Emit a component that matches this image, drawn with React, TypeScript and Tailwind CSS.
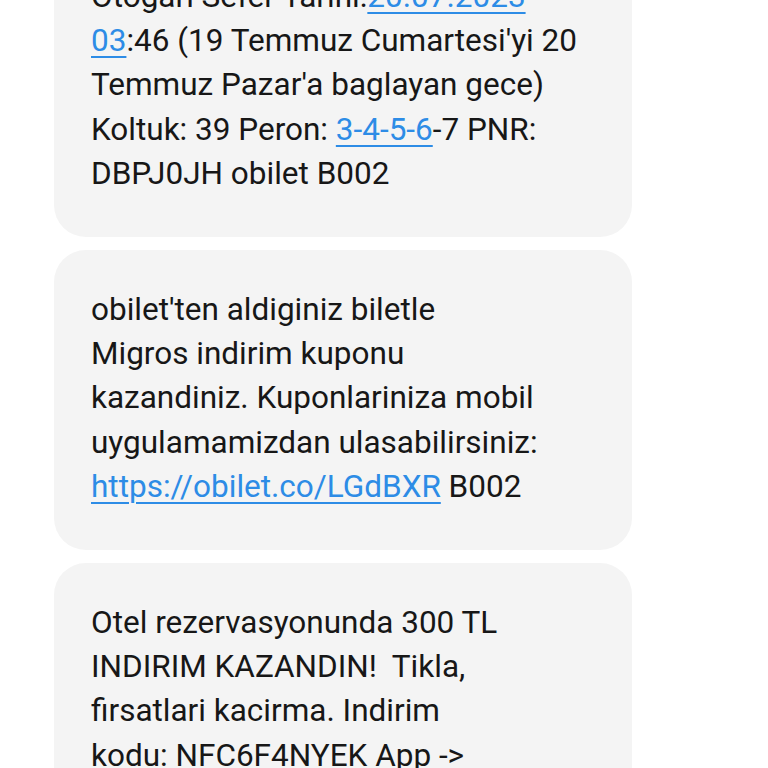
import React from 'react';

const Link: React.FC<{ children: React.ReactNode }> = ({ children }) => (
  <span className="text-[#2d8ce6] underline decoration-[1.5px] underline-offset-[5px]">{children}</span>
);

const Bubble: React.FC<{ lines: React.ReactNode[] }> = ({ lines }) => (
  <div className="w-[578px] rounded-[32px] bg-[#f4f4f4] px-[37px] pt-[38px] pb-[41px]">
    {lines.map((l, i) => (
      <div key={i} className="whitespace-pre">
        {l}
      </div>
    ))}
  </div>
);

export default function App() {
  return (
    <div
      className="h-[768px] w-[768px] overflow-hidden bg-white pl-[54px] text-[31.5px] leading-[44.2px] text-[#171717]"
      style={{ fontFamily: 'Roboto, "Noto Sans", sans-serif' }}
    >
      <div className="-mt-[63px] flex flex-col gap-[13px]">
        <Bubble
          lines={[
            <>Otogari Sefer Tarihi:<Link>20.07.2023</Link></>,
            <><Link>03</Link>:46 (19 Temmuz Cumartesi'yi 20</>,
            <>Temmuz Pazar'a baglayan gece)</>,
            <>Koltuk: 39 Peron: <Link>3-4-5-6</Link>-7 PNR:</>,
            <>DBPJ0JH obilet B002</>,
          ]}
        />
        <Bubble
          lines={[
            <>obilet'ten aldiginiz biletle</>,
            <>Migros indirim kuponu</>,
            <>kazandiniz. Kuponlariniza mobil</>,
            <>uygulamamizdan ulasabilirsiniz:</>,
            <><Link>https://obilet.co/LGdBXR</Link> B002</>,
          ]}
        />
        <Bubble
          lines={[
            <>Otel rezervasyonunda 300 TL</>,
            <>INDIRIM KAZANDIN!  Tikla,</>,
            <>firsatlari kacirma. Indirim</>,
            <>kodu: NFC6F4NYEK App -&gt;</>,
            <>obilet.com/otel B002</>,
          ]}
        />
      </div>
    </div>
  );
}
